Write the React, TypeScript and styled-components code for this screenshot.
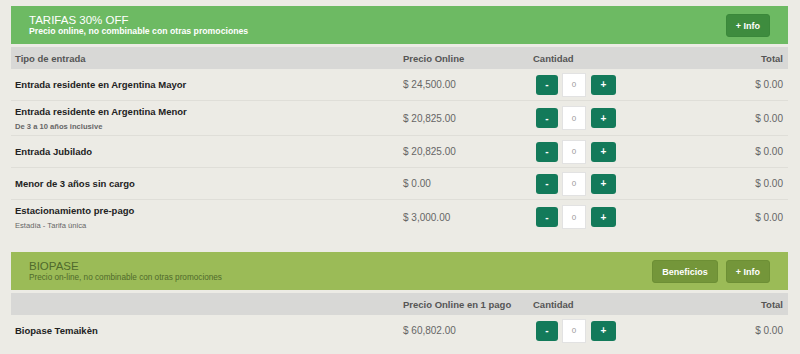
import React from "react";
import styled, { createGlobalStyle } from "styled-components";

const GlobalStyle = createGlobalStyle`
  body {
    margin: 0;
    background: #ecebe5;
    font-family: "Liberation Sans", Arial, sans-serif;
  }
`;

const Page = styled.div`
  padding: 6px 12px 0 11px;
`;

const Section = styled.section`
  margin-bottom: 18px;
`;

const Banner = styled.div<{ $tone: "green" | "olive" }>`
  height: 38px;
  display: flex;
  align-items: center;
  padding: 0 18px;
  background: ${(p) => (p.$tone === "green" ? "#6dba63" : "#9bbb57")};
  color: ${(p) => (p.$tone === "green" ? "#fff" : "#4f6a2c")};
`;

const BannerText = styled.div`
  flex: 1;
  display: flex;
  flex-direction: column;
`;

const BannerTitle = styled.div`
  font-size: 11.5px;
  line-height: 12px;
  margin-top: 1px;
`;

const BannerSub = styled.div<{ $bold?: boolean }>`
  font-size: ${(p) => (p.$bold ? "8.7px" : "8.2px")};
  font-weight: ${(p) => (p.$bold ? "bold" : "normal")};
  line-height: 11px;
`;

const BannerActions = styled.div`
  display: flex;
  gap: 8px;
  margin-top: 1px;
`;

const BannerButton = styled.button<{ $tone: "green" | "olive" }>`
  height: 23px;
  padding: 0 9px;
  border: 1px solid ${(p) => (p.$tone === "green" ? "#3a883a" : "#6d8f35")};
  border-radius: 3px;
  background: ${(p) => (p.$tone === "green" ? "#3e8c3e" : "#74963a")};
  color: #fff;
  font-family: inherit;
  font-size: 9px;
  font-weight: bold;
`;

const Grid = styled.div`
  display: grid;
  grid-template-columns: 388px 130px 120px 1fr;
  align-items: center;
  padding: 0 5px 0 4px;
`;

const HeadRow = styled(Grid)`
  margin-top: 3px;
  height: 22px;
  background: #d8d8d6;
  color: #555;
  font-size: 9.5px;
  font-weight: bold;
`;

const Row = styled(Grid)<{ $tall?: boolean; $last?: boolean }>`
  height: ${(p) => (p.$tall ? "34px" : "31px")};
  border-bottom: ${(p) => (p.$last ? "none" : "1px solid #dfded8")};
`;

const Right = styled.div`
  text-align: right;
`;

const Label = styled.div`
  color: #222;
  font-size: 9.5px;
  font-weight: bold;
`;

const SubLabel = styled.div<{ $bold?: boolean }>`
  margin-top: 5px;
  color: #666;
  font-size: 7.6px;
  font-weight: ${(p) => (p.$bold ? "bold" : "normal")};
`;

const Money = styled.div`
  color: #666;
  font-size: 10px;
`;

const Qty = styled.div`
  display: flex;
  align-items: center;
  padding-left: 3px;
`;

const StepButton = styled.button<{ $wide?: boolean }>`
  width: ${(p) => (p.$wide ? "25px" : "22px")};
  height: 20px;
  padding: 0;
  border: none;
  border-radius: 3px;
  background: #137a5a;
  color: #fff;
  font-family: inherit;
  font-size: 10px;
  font-weight: bold;
`;

const QtyInput = styled.div`
  width: 24px;
  height: 24px;
  margin: 0 5px 0 4px;
  box-sizing: border-box;
  border: 1px solid #e2e2e2;
  background: #fff;
  color: #999;
  font-size: 8px;
  display: flex;
  align-items: center;
  justify-content: center;
`;

type Item = { name: string; sub?: string; subBold?: boolean; price: string };

const tarifas: Item[] = [
  { name: "Entrada residente en Argentina Mayor", price: "$ 24,500.00" },
  { name: "Entrada residente en Argentina Menor", sub: "De 3 a 10 años inclusive", subBold: true, price: "$ 20,825.00" },
  { name: "Entrada Jubilado", price: "$ 20,825.00" },
  { name: "Menor de 3 años sin cargo", price: "$ 0.00" },
  { name: "Estacionamiento pre-pago", sub: "Estadía - Tarifa única", price: "$ 3,000.00" },
];

const biopase: Item[] = [{ name: "Biopase Temaikèn", price: "$ 60,802.00" }];

const Quantity = () => (
  <Qty>
    <StepButton>-</StepButton>
    <QtyInput>0</QtyInput>
    <StepButton $wide>+</StepButton>
  </Qty>
);

const Rows = ({ items }: { items: Item[] }) => (
  <>
    {items.map((item, i) => (
      <Row key={item.name} $tall={!!item.sub} $last={i === items.length - 1}>
        <div>
          <Label>{item.name}</Label>
          {item.sub && <SubLabel $bold={item.subBold}>{item.sub}</SubLabel>}
        </div>
        <Money>{item.price}</Money>
        <Quantity />
        <Right>
          <Money>$ 0.00</Money>
        </Right>
      </Row>
    ))}
  </>
);

export default function App() {
  return (
    <>
      <GlobalStyle />
      <Page>
        <Section>
          <Banner $tone="green">
            <BannerText>
              <BannerTitle>TARIFAS 30% OFF</BannerTitle>
              <BannerSub $bold>Precio online, no combinable con otras promociones</BannerSub>
            </BannerText>
            <BannerActions>
              <BannerButton $tone="green">+ Info</BannerButton>
            </BannerActions>
          </Banner>
          <HeadRow>
            <div>Tipo de entrada</div>
            <div>Precio Online</div>
            <div>Cantidad</div>
            <Right>Total</Right>
          </HeadRow>
          <Rows items={tarifas} />
        </Section>
        <Section>
          <Banner $tone="olive">
            <BannerText>
              <BannerTitle>BIOPASE</BannerTitle>
              <BannerSub>Precio on-line, no combinable con otras promociones</BannerSub>
            </BannerText>
            <BannerActions>
              <BannerButton $tone="olive">Beneficios</BannerButton>
              <BannerButton $tone="olive">+ Info</BannerButton>
            </BannerActions>
          </Banner>
          <HeadRow>
            <div />
            <div>Precio Online en 1 pago</div>
            <div>Cantidad</div>
            <Right>Total</Right>
          </HeadRow>
          <Rows items={biopase} />
        </Section>
      </Page>
    </>
  );
}
